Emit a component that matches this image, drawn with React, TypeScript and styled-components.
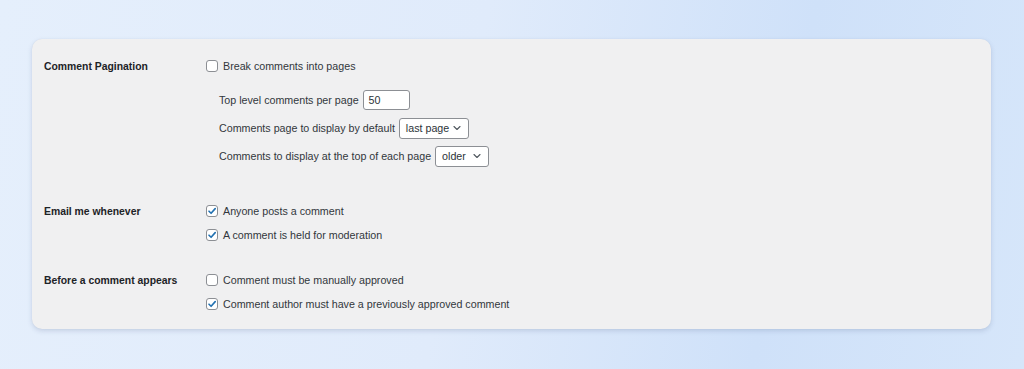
import React from "react";
import styled, { createGlobalStyle } from "styled-components";

const Global = createGlobalStyle`
  html, body { margin: 0; padding: 0; }
  body {
    width: 1024px;
    height: 369px;
    overflow: hidden;
    background: linear-gradient(100deg, #e5effc 0%, #e0ebfb 45%, #cfe1f9 75%, #d6e6fa 100%);
    font-family: "Liberation Sans", Arial, sans-serif;
  }
`;

const Page = styled.div`
  padding: 39px 33px 0 32px;
`;

const Card = styled.div`
  background: #f0f0f1;
  border-radius: 10px;
  box-shadow: 0 2px 5px rgba(60, 80, 120, 0.18), 0 0 1px rgba(60, 80, 120, 0.1);
  padding: 15px 12px 14px 12px;
  height: 290px;
  box-sizing: border-box;
`;

const Section = styled.div<{ $top: number }>`
  display: flex;
  margin-top: ${(p) => p.$top}px;
`;

const Label = styled.div`
  width: 162px;
  flex: none;
  font-size: 10.4px;
  font-weight: 700;
  color: #1d2327;
  height: 24px;
  line-height: 26px;
`;

const Fields = styled.div`
  display: flex;
  flex-direction: column;
`;

const CheckRow = styled.label`
  display: flex;
  align-items: center;
  gap: 5px;
  height: 24px;
  font-size: 10.7px;
  color: #32373c;
`;

const Box = styled.span`
  width: 10px;
  height: 10px;
  border: 1px solid #8c8f94;
  border-radius: 3px;
  background: #fff;
  display: flex;
  align-items: center;
  justify-content: center;
  flex: none;
`;

const SubList = styled.div`
  display: flex;
  flex-direction: column;
  margin-top: 8px;
  padding-left: 13px;
`;

const SubRow = styled.div`
  display: flex;
  align-items: center;
  gap: 4px;
  height: 28px;
  font-size: 10.7px;
  color: #32373c;
`;

const TextInput = styled.div`
  width: 47px;
  height: 20px;
  box-sizing: border-box;
  border: 1px solid #8c8f94;
  border-radius: 3px;
  background: #fff;
  font-size: 10.7px;
  color: #2c3338;
  padding-left: 5px;
  display: flex;
  align-items: center;
`;

const Select = styled.div<{ $w: number }>`
  width: ${(p) => p.$w}px;
  height: 21px;
  box-sizing: border-box;
  border: 1px solid #8c8f94;
  border-radius: 3px;
  background: #fff;
  font-size: 10.7px;
  color: #2c3338;
  padding: 0 7px 0 6px;
  display: flex;
  align-items: center;
  justify-content: space-between;
`;

const Check = () => (
  <svg width="10" height="10" viewBox="0 0 10 10">
    <path d="M2 5.2 L4.1 7.3 L8.2 2.6" fill="none" stroke="#2271b1" strokeWidth="1.6" strokeLinecap="round" strokeLinejoin="round" />
  </svg>
);

const Chevron = () => (
  <svg width="8" height="6" viewBox="0 0 8 6">
    <path d="M1 1.5 L4 4.5 L7 1.5" fill="none" stroke="#50575e" strokeWidth="1.1" strokeLinecap="round" strokeLinejoin="round" />
  </svg>
);

const Checkbox = ({ checked, children }: { checked?: boolean; children: React.ReactNode }) => (
  <CheckRow>
    <Box>{checked && <Check />}</Box>
    {children}
  </CheckRow>
);

export default function App() {
  return (
    <>
      <Global />
      <Page>
        <Card>
          <Section $top={0}>
            <Label>Comment Pagination</Label>
            <Fields>
              <Checkbox>Break comments into pages</Checkbox>
              <SubList>
                <SubRow>
                  Top level comments per page <TextInput>50</TextInput>
                </SubRow>
                <SubRow>
                  Comments page to display by default
                  <Select $w={70}>
                    last page <Chevron />
                  </Select>
                </SubRow>
                <SubRow>
                  Comments to display at the top of each page
                  <Select $w={54}>
                    older <Chevron />
                  </Select>
                </SubRow>
              </SubList>
            </Fields>
          </Section>
          <Section $top={29}>
            <Label>Email me whenever</Label>
            <Fields>
              <Checkbox checked>Anyone posts a comment</Checkbox>
              <Checkbox checked>A comment is held for moderation</Checkbox>
            </Fields>
          </Section>
          <Section $top={21}>
            <Label>Before a comment appears</Label>
            <Fields>
              <Checkbox>Comment must be manually approved</Checkbox>
              <Checkbox checked>Comment author must have a previously approved comment</Checkbox>
            </Fields>
          </Section>
        </Card>
      </Page>
    </>
  );
}
